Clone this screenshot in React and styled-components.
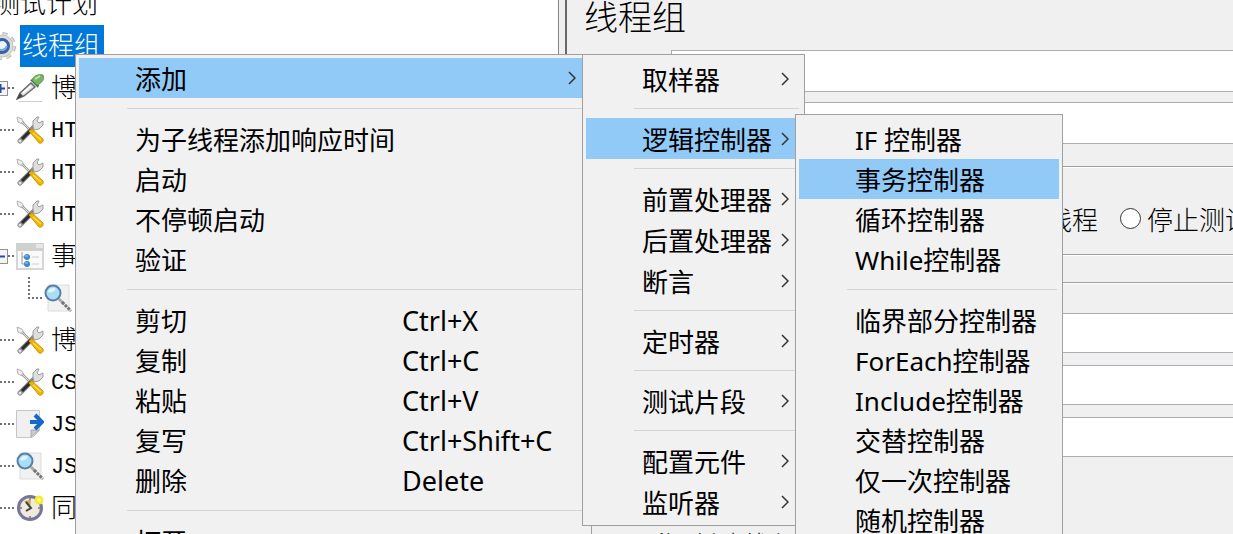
import React from "react";
import styled, { createGlobalStyle } from "styled-components";

const TREE = [
  { label: "测试计划", icon: null, root: true },
  { label: "线程组", icon: "gear", root: true, selected: true },
  { label: "博客园", icon: "dropper", toggle: "plus" },
  { label: "HTTP", icon: "tools", latin: true },
  { label: "HTTP", icon: "tools", latin: true },
  { label: "HTTP", icon: "tools", latin: true },
  { label: "事务", icon: "window", toggle: "minus" },
  { label: "", icon: "lens", child: true },
  { label: "博客园", icon: "tools" },
  { label: "CSV", icon: "tools", latin: true },
  { label: "JSR", icon: "arrow", latin: true },
  { label: "JSON", icon: "lens", latin: true },
  { label: "同步", icon: "clock" },
];

const MAIN_MENU = [
  [{ label: "添加", sub: true, active: true }],
  [
    { label: "为子线程添加响应时间" },
    { label: "启动" },
    { label: "不停顿启动" },
    { label: "验证" },
  ],
  [
    { label: "剪切", keys: "Ctrl+X" },
    { label: "复制", keys: "Ctrl+C" },
    { label: "粘贴", keys: "Ctrl+V" },
    { label: "复写", keys: "Ctrl+Shift+C" },
    { label: "删除", keys: "Delete" },
  ],
  [{ label: "打开..." }],
];

const ADD_MENU = [
  [{ label: "取样器", sub: true }],
  [{ label: "逻辑控制器", sub: true, active: true }],
  [
    { label: "前置处理器", sub: true },
    { label: "后置处理器", sub: true },
    { label: "断言", sub: true },
  ],
  [{ label: "定时器", sub: true }],
  [{ label: "测试片段", sub: true }],
  [
    { label: "配置元件", sub: true },
    { label: "监听器", sub: true },
  ],
];

const LOGIC_MENU = [
  [
    { label: "IF 控制器" },
    { label: "事务控制器", active: true },
    { label: "循环控制器" },
    { label: "While控制器" },
  ],
  [
    { label: "临界部分控制器" },
    { label: "ForEach控制器" },
    { label: "Include控制器" },
    { label: "交替控制器" },
    { label: "仅一次控制器" },
    { label: "随机控制器" },
  ],
];

const icons = {
  gear: (
    <>
      <circle cx="14" cy="14" r="12" fill="none" stroke="#b4b4b4" strokeWidth="4" strokeDasharray="5 4.42" />
      <circle cx="14" cy="14" r="12" fill="none" stroke="#dedede" strokeWidth="2" strokeDasharray="5 4.42" />
      <circle cx="14" cy="14" r="11" fill="#dcdcdc" stroke="#c2c2c2" />
      <circle cx="14" cy="14" r="6.5" fill="#eef3fa" stroke="#3563a5" strokeWidth="3" />
      <path d="M10 17c3 2 7 1 9-3" stroke="#7ea6d8" strokeWidth="2" fill="none" />
    </>
  ),
  dropper: (
    <>
      <path d="M3 27.5h23" stroke="#cfcfcf" />
      <path d="M1 25l3-6L15 9l4 4L8 22z" fill="#dcdcdc" stroke="#666" strokeWidth="1.4" />
      <path d="M7 19l8-7" stroke="#fff" strokeWidth="2" />
      <path d="M1 25l3-6 3 3z" fill="#444" />
      <path d="M14 6l8 8 1-3-6-6z" fill="#4e7446" />
      <path d="M16 6c1-4 6-6 11-5 1 3 1 6-4 9l-2 1z" fill="#79b566" stroke="#5c984d" />
      <path d="M19 5l5-3" stroke="#c3e3b6" strokeWidth="2" />
    </>
  ),
  tools: (
    <>
      <path d="M1 1l5 2 2 4-2 1-4-2z" fill="#eee" stroke="#b5b5b5" />
      <path d="M6 6l9 9" stroke="#999" strokeWidth="2.4" />
      <path d="M6 6l9 9" stroke="#ddd" strokeWidth="1" />
      <path d="M4 25L18 11" stroke="#8a8a8a" strokeWidth="5" strokeLinecap="round" />
      <path d="M6 23L15 14" stroke="#2b2b2b" strokeWidth="3" />
      <circle cx="4" cy="25" r="1.5" fill="#e4e4e4" />
      <path d="M17 10V5l4-4h2l-2 4 2 2 4-2v4l-4 4-5 1z" fill="#dedede" stroke="#9d9d9d" />
      <path d="M13 15l3-2 11 10c1 3-2 5-4 4z" fill="#f0b400" stroke="#d39a00" />
      <path d="M17 17l8 7" stroke="#ffd95a" strokeWidth="1.5" />
    </>
  ),
  window: (
    <>
      <rect x="1" y="2" width="26" height="25" fill="#fafafa" stroke="#d6d6d6" strokeWidth="2" />
      <path d="M0 1h28v8H0z" fill="#d0d0d0" />
      <path d="M20 2h7v4h-7z" fill="#e6e6e6" />
      <path d="M6 10v12h3M6 15h3" stroke="#9a9a9a" fill="none" />
      <circle cx="11" cy="15" r="3" fill="#3d87d0" />
      <circle cx="11" cy="22" r="3" fill="#3d87d0" />
      <path d="M9 14h3M9 21h3" stroke="#a4cdf2" />
      <path d="M16 15h7M16 22h7" stroke="#e4e4e4" strokeWidth="2" />
    </>
  ),
  lens: (
    <>
      <path d="M4 1h21v26H4z" fill="#f1f1f1" stroke="#dcdcdc" />
      <path d="M15 15l5 5" stroke="#aaa" strokeWidth="3" />
      <path d="M18 18l9 9" stroke="#777" strokeWidth="3" strokeDasharray="3 1" />
      <circle cx="9" cy="9" r="7.5" fill="#a8def7" stroke="#5a7fa5" strokeWidth="2" />
      <path d="M4 8a5 5 0 0 1 8-3c-2 3-5 4-8 3z" fill="#dff5ff" />
    </>
  ),
  arrow: (
    <>
      <path d="M0.5 0.5h23v20l-7 7H0.5z" fill="#f0f0f0" stroke="#c6c6c6" />
      <path d="M15 27v-7h8z" fill="#ccc" stroke="#aaa" />
      <path d="M14 12h12M19 5l7 7-7 7" stroke="#1769c6" strokeWidth="4" fill="none" />
    </>
  ),
  clock: (
    <>
      <circle cx="14" cy="14" r="11.5" fill="#eeeadd" stroke="#77759a" strokeWidth="3" />
      <path d="M14 14L8 7l7-1z" fill="#cba94e" />
      <path d="M10 8l5 6-5 3" stroke="#444" strokeWidth="2" fill="none" />
      <path d="M14 4v2M14 22v2M4 14h2M22 14h2" stroke="#777" strokeWidth="1.5" />
      <circle cx="23" cy="6" r="4.5" fill="#f8ea23" />
      <circle cx="23" cy="6" r="2" fill="#fffaa0" />
    </>
  ),
};

const Icon = ({ name }) => (
  <IconSvg viewBox="0 0 28 28" aria-hidden="true">
    {icons[name]}
  </IconSvg>
);

const Menu = ({ groups }) =>
  groups.map((group, i) => (
    <Group key={i}>
      {group.map((item) => (
        <Item key={item.label}>
          <ItemButton type="button" $active={item.active}>
            <Label>{item.label}</Label>
            {item.keys ? <Keys>{item.keys}</Keys> : null}
            {item.sub ? (
              <Chevron viewBox="0 0 8 14" aria-hidden="true">
                <path d="M1 1l6 6-6 6" />
              </Chevron>
            ) : null}
          </ItemButton>
        </Item>
      ))}
    </Group>
  ));

export default function App() {
  return (
    <Page>
      <GlobalStyle />
      <TreePane>
        <Tree>
          {TREE.map((node, i) => (
            <Node key={i} $root={node.root} $child={node.child}>
              {node.root ? null : <Branch $child={node.child} />}
              {node.toggle ? (
                <Toggle type="button" aria-label={node.label}>
                  <svg width="13" height="13" aria-hidden="true">
                    <path d={node.toggle === "plus" ? "M2 6.5h9M6.5 2v9" : "M2 6.5h9"} />
                  </svg>
                </Toggle>
              ) : null}
              {node.icon ? <Icon name={node.icon} /> : null}
              <NodeText $selected={node.selected} $root={node.root} $latin={node.latin}>
                {node.label}
              </NodeText>
            </Node>
          ))}
        </Tree>
      </TreePane>
      <Splitter />
      <Editor>
        <Title>线程组</Title>
        <Names>
          <Field type="text" aria-label="名称" />
          <Field type="text" aria-label="注释" />
        </Names>
        <ErrorBox>
          <Radio>
            <input type="radio" name="action" />
            停止线程
          </Radio>
          <Radio>
            <input type="radio" name="action" />
            停止测试
          </Radio>
        </ErrorBox>
        <Properties>
          <Field type="text" aria-label="线程数" />
          <Field type="text" aria-label="Ramp-Up" />
          <Field type="text" aria-label="循环次数" />
        </Properties>
        <Check>
          <input type="checkbox" />
          延迟创建线程
        </Check>
      </Editor>
      <MainMenu>
        <Menu groups={MAIN_MENU} />
      </MainMenu>
      <AddMenu>
        <Menu groups={ADD_MENU} />
      </AddMenu>
      <LogicMenu>
        <Menu groups={LOGIC_MENU} />
      </LogicMenu>
    </Page>
  );
}

const GlobalStyle = createGlobalStyle`
  * {
    box-sizing: border-box;
  }

  body {
    margin: 0;
    overflow: hidden;
    color: #000;
    font-family: "Noto Sans", "Noto Sans CJK SC", sans-serif;
  }
`;

const Page = styled.main`
  position: relative;
  display: flex;
  height: 100vh;
  overflow: hidden;
  background: #f0f0f0;
`;

const TreePane = styled.nav`
  flex: 0 0 559px;
  overflow: hidden;
  background: #fff;
  border-right: 1px solid #828790;
`;

/* scrolled a little, so the first row is cut */
const Tree = styled.ul`
  list-style: none;
  margin: -17px 0 0;
  padding: 0;
`;

const Node = styled.li`
  display: flex;
  align-items: center;
  position: relative;
  height: 42px;
  margin-left: ${(p) => (p.$root ? -12 : p.$child ? 44 : 16)}px;
`;

const Branch = styled.span`
  position: absolute;
  left: -16px;
  top: ${(p) => (p.$child ? 0 : 20)}px;
  width: 14px;
  height: ${(p) => (p.$child ? 22 : 2)}px;
  border-bottom: 2px dotted #707070;
  border-left: ${(p) => (p.$child ? "2px dotted #707070" : "0")};
`;

const Toggle = styled.button`
  position: absolute;
  left: -22px;
  width: 13px;
  height: 13px;
  padding: 0;
  border: 0;
  background: #f4f4f4;
  outline: 1px solid #919191;

  svg {
    display: block;
    stroke: #2b4a9a;
    stroke-width: 2;
  }
`;

const IconSvg = styled.svg`
  flex: none;
  width: 28px;
  height: 28px;
`;

/* Liberation has no light cut, so latin names take the regular weight */
const NodeText = styled.span`
  margin-left: ${(p) => (p.$root ? 4 : 5)}px;
  padding: 4px 4px 0 2px;
  line-height: 38px;
  font-family: "Liberation Mono", "Noto Sans CJK SC", monospace;
  font-weight: ${(p) => (p.$latin ? 400 : 300)};
  font-size: ${(p) => (p.$latin ? 22 : 26)}px;
  white-space: nowrap;
  color: ${(p) => (p.$selected ? "#fff" : "#000")};
  background: ${(p) => (p.$selected ? "#0078d7" : "transparent")};
`;

const Splitter = styled.div`
  flex: none;
  width: 8px;
  border-right: 2px solid #696969;
`;

const Editor = styled.section`
  flex: 1;
  min-width: 0;
  overflow: hidden;
  font-family: "Noto Sans CJK SC", sans-serif;
  font-weight: 300;
  font-size: 26px;
`;

const Title = styled.h1`
  margin: 0 0 18px;
  padding-left: 17px;
  font-size: 34px;
  font-weight: 300;
  line-height: 32px;
`;

const Field = styled.input`
  width: 100%;
  border: 1px solid #abadb3;
  border-right: 0;
  background: #fff;
  font: inherit;
`;

const Names = styled.div`
  display: grid;
  grid-auto-rows: 42px;
  gap: 10px;
  padding-left: 104px;
`;

const ErrorBox = styled.div`
  display: flex;
  align-items: center;
  gap: 22px;
  height: 89px;
  margin-top: 22px;
  padding: 16px 0 0 400px;
  border: solid #a0a0a0;
  border-width: 1px 0;
  box-shadow: inset 0 1px #fff, 0 1px #fff;
`;

const Radio = styled.label`
  display: flex;
  flex: none;
  align-items: center;
  gap: 6px;
  white-space: nowrap;

  input {
    appearance: none;
    width: 21px;
    height: 21px;
    margin: 0;
    border: 1px solid #333;
    border-radius: 50%;
    background: #fff;
  }
`;

const Properties = styled.div`
  display: grid;
  grid-auto-rows: 40px;
  gap: 12px;
  margin-top: 27px;
  padding: 30px 0 0 200px;
  border-top: 1px solid #a0a0a0;
  box-shadow: inset 0 1px #fff;
`;

const Check = styled.label`
  display: flex;
  align-items: center;
  gap: 6px;
  padding: 68px 0 0 46px;
  white-space: nowrap;

  input {
    width: 20px;
    height: 20px;
    margin: 0;
  }
`;

const Popup = styled.div`
  position: absolute;
  padding: 3px;
  background: #f1f1f1;
  border: 1px solid #a0a0a0;
  font-size: 26px;
`;

const Group = styled.ul`
  list-style: none;
  margin: 0;
  padding: 0;

  & + &::before {
    content: "";
    display: block;
    height: 1px;
    margin: var(--sep) 2px var(--sep) 48px;
    background: #d4d4d4;
  }
`;

const Item = styled.li`
  display: block;
`;

const ItemButton = styled.button`
  display: flex;
  align-items: center;
  width: 100%;
  height: var(--row);
  padding: 0 12px 0 56px;
  border: 0;
  color: inherit;
  font: inherit;
  text-align: left;
  white-space: nowrap;
  background: ${(p) => (p.$active ? "#91c9f7" : "transparent")};
`;

const Label = styled.span`
  flex: 1;
`;

const Keys = styled.span`
  width: 174px;
  font-size: 27px;
`;

const Chevron = styled.svg`
  width: 8px;
  height: 14px;
  fill: none;
  stroke: #333;
  stroke-width: 1.5;
`;

const MainMenu = styled(Popup)`
  --row: 40px;
  --sep: 10px;
  left: 75px;
  top: 54px;
  width: 517px;
`;

const AddMenu = styled(Popup)`
  --row: 41px;
  --sep: 9px;
  left: 582px;
  top: 54px;
  width: 223px;
`;

const LogicMenu = styled(Popup)`
  --row: 40px;
  --sep: 10px;
  left: 795px;
  top: 114px;
  width: 268px;
  padding-top: 4px;
`;
